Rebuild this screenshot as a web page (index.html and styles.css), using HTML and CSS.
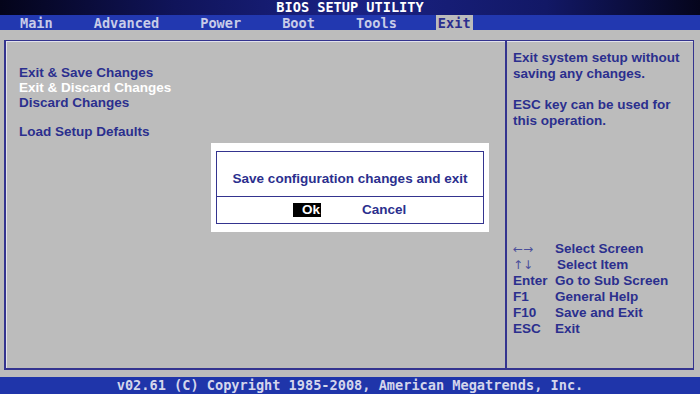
FILE: index.html
```html
<!DOCTYPE html>
<html lang="en">
<head>
    <meta charset="UTF-8">
    <meta name="viewport" content="width=device-width, initial-scale=1.0">
    <title>BIOS Setup Utility</title>
    <link rel="stylesheet" href="styles.css">
</head>
<body>
    <div class="screen">
        <div class="title-bar">BIOS SETUP UTILITY</div>
        <div class="menu-bar">
            <span class="menu-item">Main</span>
            <span class="menu-item">Advanced</span>
            <span class="menu-item">Power</span>
            <span class="menu-item">Boot</span>
            <span class="menu-item">Tools</span>
            <span class="menu-item active">Exit</span>
        </div>
        <div class="main">
            <div class="frame">
                <div class="options">
                    <div class="option">Exit &amp; Save Changes</div>
                    <div class="option selected">Exit &amp; Discard Changes</div>
                    <div class="option">Discard Changes</div>
                    <div class="option spaced">Load Setup Defaults</div>
                </div>
                <div class="help">
                    <p class="help-text">Exit system setup without<br>saving any changes.</p>
                    <p class="help-text">ESC key can be used for<br>this operation.</p>
                    <div class="keys">
                        <div class="key-row"><span class="key arrow">&larr;&rarr;</span><span>Select Screen</span></div>
                        <div class="key-row"><span class="key arrow">&uarr;&darr;</span><span class="nudge">Select Item</span></div>
                        <div class="key-row"><span class="key">Enter</span><span>Go to Sub Screen</span></div>
                        <div class="key-row"><span class="key">F1</span><span>General Help</span></div>
                        <div class="key-row"><span class="key">F10</span><span>Save and Exit</span></div>
                        <div class="key-row"><span class="key">ESC</span><span>Exit</span></div>
                    </div>
                </div>
            </div>

            <!-- confirm dialog over the options panel -->
            <div class="dialog">
                <div class="dialog-inner">
                    <div class="dialog-message">Save configuration changes and exit</div>
                    <div class="dialog-buttons">
                        <span class="btn btn-ok">Ok</span>
                        <span class="btn">Cancel</span>
                    </div>
                </div>
            </div>
        </div>
        <div class="footer">v02.61 (C) Copyright 1985-2008, American Megatrends, Inc.</div>
    </div>
</body>
</html>
```

FILE: styles.css
```css
body {
    margin: 0;
    padding: 0;
    background: #bcbcbc;
}
.screen {
    width: 700px;
    height: 394px;
    display: flex;
    flex-direction: column;
    overflow: hidden;
    font-family: Arial, "Liberation Sans", sans-serif;
    font-weight: bold;
    color: #2b2f8e;
}
.title-bar,
.menu-bar,
.footer {
    font-family: "DejaVu Sans Mono", "Liberation Mono", monospace;
    font-size: 13.6px;
    font-weight: bold;
}
.title-bar {
    height: 15px;
    line-height: 15px;
    text-align: center;
    color: #ffffff;
    background: linear-gradient(to right, #04041a 0%, #10145a 25%, #1a2284 50%, #121866 78%, #05051c 100%);
}
.menu-bar {
    height: 15px;
    line-height: 16px;
    display: flex;
    gap: 37px;
    padding-left: 18px;
    background: #2238b0;
    color: #c8cce8;
}
.menu-item {
    padding: 0 2px;
}
.menu-item.active {
    background: #bcbcbc;
    color: #2b2f8e;
}
.main {
    position: relative;
    flex: 1;
    padding: 10px 6px 7px 4px;
    display: flex;
}
.frame {
    flex: 1;
    display: flex;
    border: 2px solid #34348f;
    border-top-width: 1px;
    border-right-width: 1px;
    box-shadow: inset 1px 1px 0 #e2e2ea;
}
.options {
    width: 501px;
    border-right: 2px solid #34348f;
    padding: 24px 0 0 13px;
    box-sizing: border-box;
    font-size: 13.5px;
    line-height: 15px;
}
.option.selected {
    color: #ffffff;
}
.option.spaced {
    margin-top: 14px;
}
.help {
    flex: 1;
    display: flex;
    flex-direction: column;
    padding: 9px 0 31px 6px;
    font-size: 13.5px;
    line-height: 16px;
}
.help-text {
    margin: 0 0 15px 0;
}
.keys {
    margin-top: auto;
}
.key-row {
    display: flex;
}
.key {
    width: 42px;
}
.key.arrow {
    font-family: "DejaVu Sans", sans-serif;
    font-weight: normal;
    color: #4a4e9a;
    font-size: 12px;
}
.nudge {
    padding-left: 2px;
}
.dialog {
    position: absolute;
    left: 211px;
    top: 113px;
    width: 268px;
    padding: 8px 5px;
    background: #ffffff;
}
.dialog-inner {
    border: 1px solid #34348f;
}
.dialog-message {
    height: 45px;
    line-height: 16px;
    padding-top: 19px;
    box-sizing: border-box;
    text-align: center;
    font-size: 13.5px;
    border-bottom: 1px solid #34348f;
}
.dialog-buttons {
    height: 26px;
    display: flex;
    align-items: center;
    padding-left: 76px;
    font-size: 13.5px;
}
.btn {
    line-height: 14px;
}
.btn-ok {
    width: 28px;
    margin-right: 41px;
    background: #000000;
    color: #ffffff;
    text-align: right;
    padding-right: 1px;
    box-sizing: border-box;
}
.footer {
    height: 17px;
    line-height: 17px;
    text-align: center;
    background: #1f35aa;
    color: #d4d6ec;
}
```
